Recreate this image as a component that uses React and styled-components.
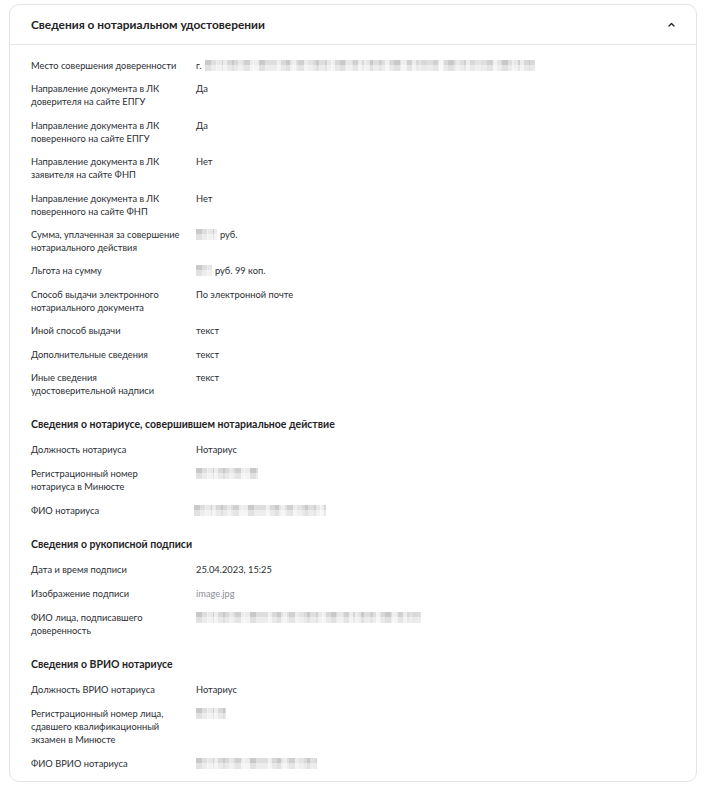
import React from "react";
import styled, { createGlobalStyle } from "styled-components";

const Global = createGlobalStyle`
  html, body { margin: 0; padding: 0; background: #ffffff; }
  body { font-family: Lato, "Noto Sans", sans-serif; color: #1f2326; -webkit-font-smoothing: antialiased; }
  * { box-sizing: border-box; }
`;

const Page = styled.div`
  padding: 4px 9px 6px 9px;
`;

const Card = styled.section`
  border: 1px solid #e1e4e8;
  border-radius: 10px;
  background: #fff;
`;

const Header = styled.div`
  height: 40px;
  display: flex;
  align-items: center;
  justify-content: space-between;
  padding: 0 21px 0 21px;
  border-bottom: 1px solid #e4e6ea;
`;

const Title = styled.h2`
  margin: 0;
  font-size: 11.9px;
  font-weight: 700;
  color: #1f2326;
  letter-spacing: 0;
`;

const Chevron = styled.svg`
  width: 7px;
  height: 5px;
  display: block;
`;

const Body = styled.div`
  padding: 14px 22px 11px 21px;
  display: flex;
  flex-direction: column;
  gap: 20px;
`;

const Section = styled.div`
  display: flex;
  flex-direction: column;
  gap: ${(p) => p.$gap}px;
`;

const SectionTitle = styled.h3`
  margin: 0;
  font-size: 10.5px;
  font-weight: 700;
  line-height: 15px;
  color: #1f2326;
`;

const Row = styled.div`
  display: grid;
  grid-template-columns: 165px 1fr;
  font-size: 9.3px;
  line-height: 13px;
`;

const Label = styled.div`
  color: #2a2e33;
  max-width: 150px;
`;

const Value = styled.div`
  color: ${(p) => (p.$muted ? "#8a8f96" : "#2a2e33")};
  display: flex;
  align-items: center;
  gap: 3px;
  align-self: start;
  height: 13px;
`;

const Redacted = styled.span`
  display: inline-block;
  width: ${(p) => p.$w}px;
  height: 11px;
  margin-left: ${(p) => p.$ml || 0}px;
  background:
    repeating-linear-gradient(90deg, rgba(255,255,255,0) 0 11px, rgba(255,255,255,0.5) 11px 17px, rgba(255,255,255,0) 17px 29px, rgba(255,255,255,0.3) 29px 37px),
    linear-gradient(180deg, rgba(255,255,255,0) 0 50%, rgba(255,255,255,0.45) 50% 100%),
    repeating-linear-gradient(90deg, #c9c9c9 0 6px, #dedede 6px 12px, #d0d0d0 12px 18px, #ececec 18px 22px, #d8d8d8 22px 27px);
  filter: blur(0.4px);
`;

const rows1 = [
  ["Место совершения доверенности", <><span>г.</span><Redacted $w={330} /></>],
  ["Направление документа в ЛК доверителя на сайте ЕПГУ", "Да"],
  ["Направление документа в ЛК поверенного на сайте ЕПГУ", "Да"],
  ["Направление документа в ЛК заявителя на сайте ФНП", "Нет"],
  ["Направление документа в ЛК поверенного на сайте ФНП", "Нет"],
  ["Сумма, уплаченная за совершение нотариального действия", <><Redacted $w={21} /><span>руб.</span></>],
  ["Льгота на сумму", <><Redacted $w={16} /><span>руб. 99 коп.</span></>],
  ["Способ выдачи электронного нотариального документа", "По электронной почте"],
  ["Иной способ выдачи", "текст"],
  ["Дополнительные сведения", "текст"],
  ["Иные сведения удостоверительной надписи", "текст"],
];

const sections = [
  {
    title: "Сведения о нотариусе, совершившем нотариальное действие",
    rows: [
      ["Должность нотариуса", "Нотариус"],
      ["Регистрационный номер нотариуса в Минюсте", <Redacted $w={62} />],
      ["ФИО нотариуса", <Redacted $w={132} $ml={-2} />],
    ],
  },
  {
    title: "Сведения о рукописной подписи",
    rows: [
      ["Дата и время подписи", "25.04.2023, 15:25"],
      ["Изображение подписи", "image.jpg", true],
      ["ФИО лица, подписавшего доверенность", <Redacted $w={225} />],
    ],
  },
  {
    title: "Сведения о ВРИО нотариусе",
    rows: [
      ["Должность ВРИО нотариуса", "Нотариус"],
      ["Регистрационный номер лица, сдавшего квалификационный экзамен в Минюсте", <Redacted $w={30} />],
      ["ФИО ВРИО нотариуса", <Redacted $w={121} />],
    ],
  },
];

const renderRows = (rows) =>
  rows.map(([l, v, muted], i) => (
    <Row key={i}>
      <Label>{l}</Label>
      <Value $muted={muted}>{v}</Value>
    </Row>
  ));

export default function App() {
  return (
    <Page>
      <Global />
      <Card>
        <Header>
          <Title>Сведения о нотариальном удостоверении</Title>
          <Chevron viewBox="0 0 7 5">
            <path d="M1 4 L3.5 1.5 L6 4" fill="none" stroke="#1f2326" strokeWidth="1.3" strokeLinecap="round" strokeLinejoin="round" />
          </Chevron>
        </Header>
        <Body>
          <Section $gap={10.4}>{renderRows(rows1)}</Section>
          {sections.map((s) => (
            <Section key={s.title} $gap={11}>
              <SectionTitle>{s.title}</SectionTitle>
              {renderRows(s.rows)}
            </Section>
          ))}
        </Body>
      </Card>
    </Page>
  );
}
